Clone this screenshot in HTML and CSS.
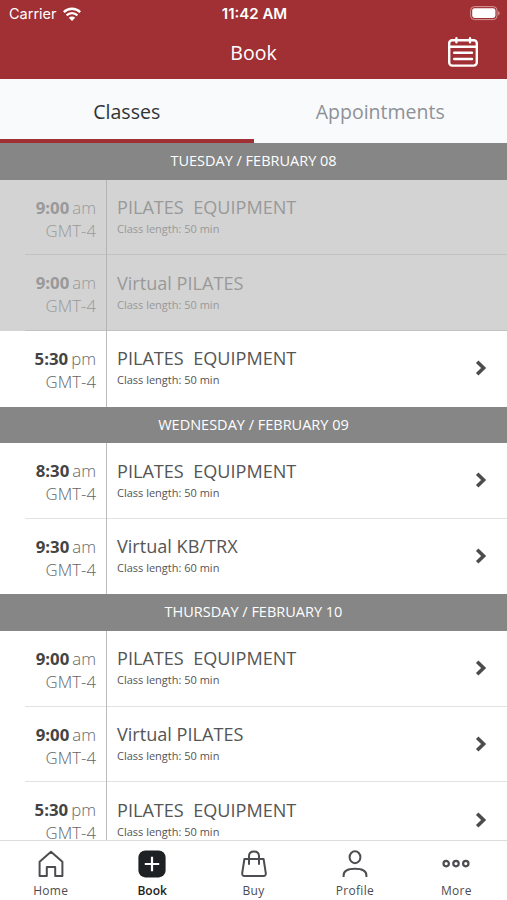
FILE: index.html
```html
<!DOCTYPE html>
<html lang="en">
<head>
    <meta charset="UTF-8">
    <meta name="viewport" content="width=device-width, initial-scale=1.0">
    <title>Book</title>
    <link rel="stylesheet" href="styles.css">
</head>
<body>
    <div class="app">
        <header class="header">
            <div class="status-bar">
                <div class="carrier">
                    <span>Carrier</span>
                    <svg class="wifi" viewBox="0 0 18 14">
                        <path d="M.8 5.1a11.8 11.8 0 0 1 16.4 0M3.6 8.3a7.8 7.8 0 0 1 10.8 0" fill="none" stroke="#fff" stroke-width="2.4"/>
                        <path d="M9 14L5.8 10.8a4.6 4.6 0 0 1 6.4 0z" fill="#fff"/>
                    </svg>
                </div>
                <div class="clock">11:42 AM</div>
                <svg class="battery" viewBox="0 0 30 15">
                    <rect x="0.6" y="0.6" width="26.4" height="13" rx="3.8" fill="none" stroke="#d39799" stroke-width="1"/>
                    <rect x="2.2" y="2.2" width="23.2" height="9.8" rx="2.4" fill="#fff"/>
                    <path d="M28.2 5v4.4c1.9-.9 1.9-3.5 0-4.4z" fill="#d39799"/>
                </svg>
            </div>
            <div class="title-bar">
                <h1>Book</h1>
                <svg class="calendar" viewBox="0 0 30 30" fill="none" stroke="#fff" stroke-width="2.4" stroke-linecap="round">
                    <rect x="1.2" y="3.2" width="27.6" height="25.4" rx="3"/>
                    <path d="M1.2 9.8h27.6M8.4 1.2v4M22 1.2v4M6.2 15.8h17.8M6.2 22h17.8"/>
                </svg>
            </div>
        </header>

        <div class="tabs">
            <div class="tab active">Classes</div>
            <div class="tab">Appointments</div>
        </div>

        <main class="schedule" id="schedule"></main>

        <nav class="nav">
            <div class="nav-item">
                <svg viewBox="0 0 28 28" fill="none" stroke="#4b4d50" stroke-width="2">
                    <path d="M2.6 26V11.7L14 1.7l11.4 10V26h-7.2v-9h-8.4v9z" stroke-linejoin="round"/>
                </svg>
                <span>Home</span>
            </div>
            <div class="nav-item active">
                <svg viewBox="0 0 28 28">
                    <rect x="0.4" y="0.4" width="27.2" height="27" rx="7" fill="#1e2124"/>
                    <path d="M14 6.8v14.4M6.8 14h14.4" stroke="#fff" stroke-width="2.2"/>
                </svg>
                <span>Book</span>
            </div>
            <div class="nav-item">
                <svg viewBox="0 0 28 28" fill="none" stroke="#4b4d50" stroke-width="2" stroke-linecap="round" stroke-linejoin="round">
                    <path d="M4.4 9h19.2l2.2 14.2q.2 2.8-2.4 2.8H4.6Q2 26 2.2 23.2z"/>
                    <path d="M9 14V6.2q0-4.6 5-4.6t5 4.6V14"/>
                </svg>
                <span>Buy</span>
            </div>
            <div class="nav-item">
                <svg viewBox="0 0 28 28" fill="none" stroke="#4b4d50" stroke-width="2">
                    <ellipse cx="14" cy="7.2" rx="5.4" ry="6"/>
                    <path d="M2.6 27v-1.6c0-4 4-6.6 11.4-6.6s11.4 2.6 11.4 6.6V27"/>
                </svg>
                <span>Profile</span>
            </div>
            <div class="nav-item">
                <svg viewBox="0 0 28 28" fill="none" stroke="#4b4d50" stroke-width="2.2">
                    <circle cx="4.2" cy="13.6" r="2.7"/>
                    <circle cx="14" cy="13.6" r="2.7"/>
                    <circle cx="23.8" cy="13.6" r="2.7"/>
                </svg>
                <span>More</span>
            </div>
        </nav>
    </div>

    <script>
        const days = [
            {
                date: 'TUESDAY / FEBRUARY 08',
                classes: [
                    { time: '9:00', period: 'am', name: 'PILATES  EQUIPMENT', length: 50, past: true },
                    { time: '9:00', period: 'am', name: 'Virtual PILATES', length: 50, past: true },
                    { time: '5:30', period: 'pm', name: 'PILATES  EQUIPMENT', length: 50 }
                ]
            },
            {
                date: 'WEDNESDAY / FEBRUARY 09',
                classes: [
                    { time: '8:30', period: 'am', name: 'PILATES  EQUIPMENT', length: 50 },
                    { time: '9:30', period: 'am', name: 'Virtual KB/TRX', length: 60 }
                ]
            },
            {
                date: 'THURSDAY / FEBRUARY 10',
                classes: [
                    { time: '9:00', period: 'am', name: 'PILATES  EQUIPMENT', length: 50 },
                    { time: '9:00', period: 'am', name: 'Virtual PILATES', length: 50 },
                    { time: '5:30', period: 'pm', name: 'PILATES  EQUIPMENT', length: 50 }
                ]
            }
        ];

        const arrow = '<svg class="arrow" viewBox="0 0 12 16"><path d="M2.2 1.8l6.4 6.2-6.4 6.2" fill="none" stroke="#4c4c4c" stroke-width="3.6"/></svg>';

        // One row of the schedule, past classes have no arrow
        function renderClass(c) {
            return `
                <div class="row ${c.past ? 'past' : ''}">
                    <div class="when">
                        <div class="time"><b>${c.time}</b><span>${c.period}</span></div>
                        <div class="zone">GMT-4</div>
                    </div>
                    <div class="info">
                        <div class="name">${c.name}</div>
                        <div class="length">Class length: ${c.length} min</div>
                    </div>
                    ${c.past ? '' : arrow}
                </div>`;
        }

        document.getElementById('schedule').innerHTML = days.map(day => `
            <section>
                <h2 class="day">${day.date}</h2>
                ${day.classes.map(renderClass).join('')}
            </section>`).join('');
    </script>
</body>
</html>
```
FILE: styles.css
```css
* {
    box-sizing: border-box;
}
body {
    margin: 0;
    font-family: "Open Sans", "Noto Sans", sans-serif;
    background-color: #fff;
    color: #555;
}
.app {
    display: flex;
    flex-direction: column;
    height: 100vh;
    overflow: hidden;
}

/* Header */
.header {
    flex: none;
    height: 79px;
    background-color: #a03033;
    color: #fff;
}
.status-bar {
    display: grid;
    grid-template-columns: 1fr auto 1fr;
    align-items: center;
    height: 27px;
    padding: 0 7px 0 9px;
    font-family: Inter, sans-serif;
    font-size: 15px;
}
.carrier {
    display: flex;
    align-items: center;
    gap: 6px;
    font-size: 14.5px;
}
.wifi {
    width: 18px;
    height: 14px;
}
.clock {
    font-weight: 600;
}
.battery {
    width: 30px;
    height: 15px;
    justify-self: end;
}
.title-bar {
    display: grid;
    grid-template-columns: 1fr auto 1fr;
    align-items: center;
    height: 50px;
    padding-right: 29px;
    padding-left: 29px;
}
h1 {
    grid-column: 2;
    margin: 0;
    font-size: 19.5px;
    font-weight: 400;
}
.calendar {
    width: 30px;
    height: 30px;
    justify-self: end;
}

/* Tabs */
.tabs {
    flex: none;
    display: flex;
    height: 64px;
    background-color: #f8fafc;
}
.tab {
    flex: 1;
    padding-top: 4px;
    border-bottom: 4px solid transparent;
    font-size: 19.5px;
    line-height: 57px;
    text-align: center;
    color: #8e9196;
}
.tab.active {
    border-bottom-color: #a03033;
    color: #303336;
}

/* Schedule */
.schedule {
    flex: 1;
    min-height: 0;
    overflow: hidden;
}
.day {
    height: 36.5px;
    margin: 0;
    background-color: #868686;
    color: #fff;
    font-size: 14.5px;
    font-weight: 400;
    line-height: 36.5px;
    text-align: center;
}
.row {
    display: flex;
    align-items: center;
    height: 75.7px;
    padding-right: 20px;
    background: linear-gradient(#e2e2e2, #e2e2e2) 25px 100% / 100% 1px no-repeat;
}
.row:last-child {
    background: none;
}
.when {
    width: 107px;
    height: 100%;
    padding: 16px 10px 0 0;
    border-right: 1px solid #bbb;
    text-align: right;
    font-size: 16.8px;
    line-height: 23px;
}
.time {
    display: flex;
    justify-content: flex-end;
    gap: 3px;
}
.time b {
    font-weight: 700;
    color: #444;
}
.time span,
.zone {
    font-weight: 300;
    color: #666;
}
.info {
    flex: 1;
    height: 100%;
    padding: 15.5px 0 0 10px;
}
.name {
    font-size: 18.1px;
    line-height: 24px;
    white-space: pre;
}
.length {
    font-size: 11px;
    line-height: 20px;
}
.arrow {
    width: 12px;
    height: 16px;
    margin-bottom: 1px;
}
.row.past {
    background-color: #d3d3d3;
    background-image: linear-gradient(#c2c2c2, #c2c2c2);
}
.past .when {
    border-color: #b4b4b4;
}
.past .time b,
.past .time span,
.past .zone,
.past .info {
    color: #999;
}

/* Bottom navigation */
.nav {
    flex: none;
    display: flex;
    height: 60px;
    border-top: 1px solid #dcdcdc;
    background-color: #fff;
}
.nav-item {
    flex: 1;
    display: flex;
    flex-direction: column;
    align-items: center;
    padding-top: 9px;
    font-size: 12px;
    font-weight: 500;
    line-height: 17px;
    letter-spacing: 0.3px;
    color: #4b4d50;
}
.nav-item svg {
    width: 28px;
    height: 28px;
    margin-bottom: 4px;
}
.nav-item.active {
    font-weight: 600;
    letter-spacing: 0;
    color: #1e2124;
}
```
